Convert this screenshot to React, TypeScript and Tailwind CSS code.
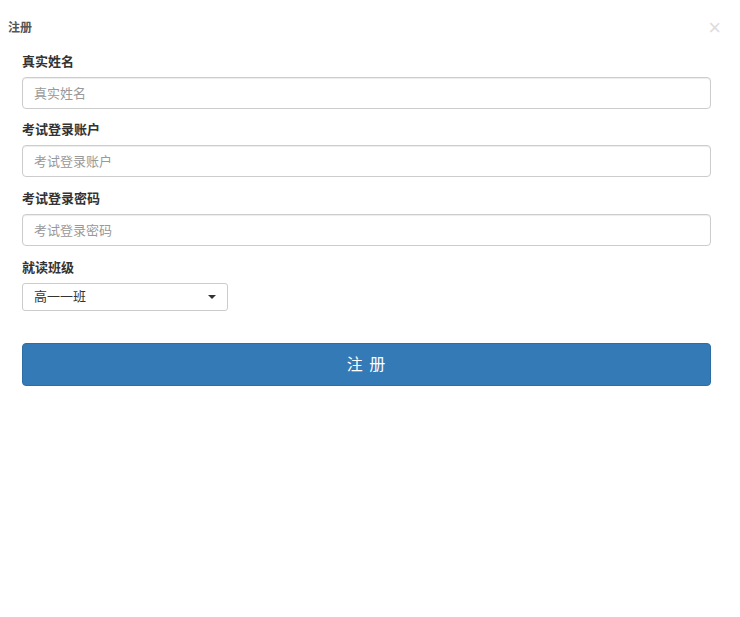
import { useState } from 'react'

const font = { fontFamily: '"Liberation Sans", "Noto Sans CJK SC", sans-serif' }

function Field({ label, placeholder, className = '' }: { label: string; placeholder: string; className?: string }) {
  return (
    <div className={`flex flex-col ${className}`}>
      <label className="text-[13px] leading-[18px] font-bold text-[#333]">{label}</label>
      <input
        type="text"
        placeholder={placeholder}
        className="mt-[6px] h-[32px] w-full rounded-[4px] border border-[#ccc] bg-white px-[11px] text-[13px] text-[#555] placeholder:text-[#999] outline-none shadow-[inset_0_1px_1px_rgba(0,0,0,0.075)]"
      />
    </div>
  )
}

export default function App() {
  const [cls, setCls] = useState('高一一班')

  return (
    <div className="min-h-[617px] w-[740px] bg-white" style={font}>
      {/* header */}
      <div className="flex items-start justify-between pl-2 pr-[19px] pt-[21px]">
        <h4 className="text-[12px] leading-[14px] font-bold text-[#555]">注册</h4>
        <button className="text-[22px] leading-[14px] font-light text-[#ddd]">×</button>
      </div>

      {/* form */}
      <div className="ml-[22px] mt-[18px] flex w-[689px] flex-col gap-[12px]">
        <Field label="真实姓名" placeholder="真实姓名" />
        <Field label="考试登录账户" placeholder="考试登录账户" />
        <Field label="考试登录密码" placeholder="考试登录密码" className="mt-[1px]" />
        <div className="mt-[1px] flex flex-col">
          <label className="text-[13px] leading-[18px] font-bold text-[#333]">就读班级</label>
          <div className="relative mt-[6px] w-[206px]">
            <select
              value={cls}
              onChange={(e) => setCls(e.target.value)}
              className="h-[28px] w-full appearance-none rounded-[3px] border border-[#ccc] bg-white pl-[11px] text-[13px] text-[#333] outline-none"
            >
              <option>高一一班</option>
              <option>高一二班</option>
            </select>
            <span className="pointer-events-none absolute right-[12px] top-[12px] h-0 w-0 border-x-[4px] border-t-[4px] border-x-transparent border-t-[#333]" />
          </div>
        </div>
        <button className="mt-[20px] h-[43px] w-full rounded-[4px] border border-[#2e6da4] bg-[#337ab7] text-[16px] tracking-[1px] text-white">
          注 册
        </button>
      </div>
    </div>
  )
}
